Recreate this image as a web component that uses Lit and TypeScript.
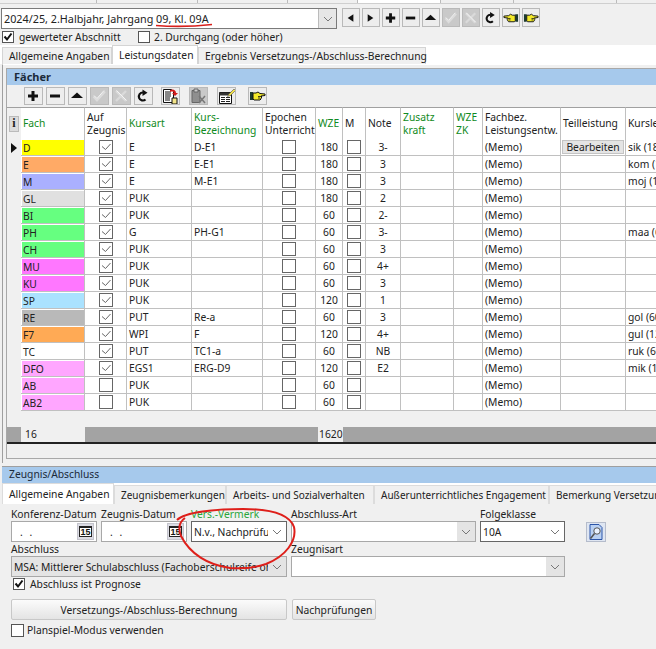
import { LitElement, html, css, svg } from "lit";
import { customElement } from "lit/decorators.js";

const ROWS: [string, string, boolean, string, string, string, string, string][] = [
  ["D", "#ffff00", true, "E", "D-E1", "180", "3-", "sik (180)"],
  ["E", "#ffaa66", true, "E", "E-E1", "180", "3", "kom (180)"],
  ["M", "#aab0ff", true, "E", "M-E1", "180", "3", "moj (180)"],
  ["GL", "#e0e0e0", true, "PUK", "", "180", "2", ""],
  ["BI", "#66ff80", true, "PUK", "", "60", "2-", ""],
  ["PH", "#66ff80", true, "G", "PH-G1", "60", "3-", "maa (60)"],
  ["CH", "#66ff80", true, "PUK", "", "60", "3", ""],
  ["MU", "#ff77ff", true, "PUK", "", "60", "4+", ""],
  ["KU", "#ff77ff", true, "PUK", "", "60", "3", ""],
  ["SP", "#aae2ff", true, "PUK", "", "120", "1", ""],
  ["RE", "#b9b9b9", true, "PUT", "Re-a", "60", "3", "gol (60)"],
  ["F7", "#ffaa55", true, "WPI", "F", "120", "4+", "gul (120)"],
  ["TC", "#ffffff", true, "PUT", "TC1-a", "60", "NB", "ruk (60)"],
  ["DFO", "#ffa6ff", true, "EGS1", "ERG-D9", "120", "E2", "mik (120)"],
  ["AB", "#ffa6ff", false, "PUK", "", "60", "", ""],
  ["AB2", "#ffa6ff", false, "PUK", "", "60", "", ""],
];

const chevron = html`<svg class="chev" viewBox="0 0 10 6" width="10" height="6"><path d="M1 1l4 4 4-4" fill="none" stroke="#777" stroke-width="1"/></svg>`;

const hand = (flip: boolean) => svg`<g transform="${flip ? "translate(17 0) scale(-1 1)" : ""}">
  <path d="M1 4h3v8H1z" fill="#1d3b30"/>
  <path d="M4 5h3l2-1 2 1.5 5 .5v1.500l-4 .5 1 1-1 1 0 1-1 1H5l-1-1z" fill="#f4ea2a" stroke="#111" stroke-width="1"/>
  <path d="M9 8.500h3M9 10h2" stroke="#111" stroke-width=".8"/>
</g>`;

const ICONS: Record<string, unknown> = {
  prev: svg`<path d="M11 4v8L5 8z" fill="#111"/>`,
  next: svg`<path d="M5 4v8l6-4z" fill="#111"/>`,
  plus: svg`<path d="M6.500 3h3v3.500H13v3H9.500V13h-3V9.500H3v-3h3.500z" fill="#111"/>`,
  minus: svg`<path d="M3 6.500h10v3H3z" fill="#111"/>`,
  up: svg`<path d="M8 4.500l6 5.500H2z" fill="#111"/>`,
  check: svg`<path d="M2.500 8.500l3.500 4L14 3.500" fill="none" stroke="#dcdcdc" stroke-width="2"/><path d="M3 7.500l3 3 7-8" fill="none" stroke="#f4f4f4" stroke-width="1"/>`,
  cross: svg`<path d="M3 3l10 10M13 3L3 13" stroke="#dadada" stroke-width="2.400" fill="none"/><path d="M3.500 2.500l10 10" stroke="#f4f4f4" stroke-width="1" fill="none"/>`,
  redo: svg`<path d="M10.500 11.500A4 4 0 1 1 8 4.500" fill="none" stroke="#111" stroke-width="2.200"/><path d="M7.500 1.500l5 3.200-5 3.300z" fill="#111"/>`,
  handL: hand(true),
  handR: hand(false),
  doc: svg`<path d="M1.500 1.500h8l2 2v11h-10z" fill="#fff" stroke="#111"/><path d="M3 4h6M3 6h6M3 8h6M3 10h5M3 12h5" stroke="#111"/><path d="M8 2c3-1.500 6 0 6 3l2 0-3 3-3-3h2c0-1-2-2-4-1z" fill="#d21b1b"/><path d="M10 10h5v6h-5z" fill="#f3e58a" stroke="#111"/>`,
  doc2: svg`<path d="M2 2.500h8v12H2z" fill="#8f8f8f" stroke="#666"/><path d="M4 1h4v3H4z" fill="#ccc" stroke="#666"/><path d="M9 8l6 7M15 8l-6 7" stroke="#777" stroke-width="1.500"/>`,
  table: svg`<path d="M1.500 4.500h12v11h-12z" fill="#fff" stroke="#111"/><path d="M1.500 4.500h12v3h-12z" fill="#333"/><path d="M3 9h4v1H3zM3 11h4v1H3zM3 13h4v1H3zM8 9h4v1H8zM8 11h4v1H8zM8 13h4v1H8z" fill="#222"/><path d="M11 6l5-5 1.500 1.500-5 5-3 1z" fill="#f2e24a" stroke="#555" stroke-width=".6"/>`,
};

@customElement("app-root")
export class AppRoot extends LitElement {
  static styles = css`
    :host { display: block; position: relative; width: 656px; height: 649px; overflow: hidden; background: #f0f0f0;
      font-family: "Noto Sans", "DejaVu Sans", sans-serif; font-size: 10.3px; color: #222; }
    * { box-sizing: border-box; }
    .strip { display: flex; height: 4px; border-bottom: 1px solid #cfcfcf; background: #f0f0f0; }
    .strip span { border-right: 1px solid #bbb; }
    .strip .on { background: #fff; }
    .head { display: flex; height: 21px; margin: 4px 0 0 1px; }
    .combo { display: flex; align-items: center; justify-content: space-between; background: #fff; border: 1px solid #7a7a7a; }
    .main-combo { width: 336px; padding-left: 2px; font-size: 10.8px; }
    .main-combo .btn { width: 18px; height: 100%; background: #e6e6e6; border-left: 1px solid #bbb; display: flex; align-items: center; justify-content: center; }
    .nav { display: flex; margin-left: 5px; gap: 2px; }
    .tb { width: 18px; height: 19px; background: #ededed; border: 1px solid #b9b9b9; display: flex; align-items: center; justify-content: center; flex: none; }
    .tb.off { background: #c9c9c9; }
    .checks { display: flex; align-items: center; height: 13px; margin-top: 1px; }
    .cb { width: 12px; height: 12px; border: 1px solid #555; background: #fff; display: inline-flex; flex: none; }
    .cb svg { display: block; }
    .c1 { margin-left: 2px; }
    .checks .t { margin-left: 5px; width: 119px; }
    .checks .t2 { margin-left: 4px; }
    .tabs { display: flex; align-items: flex-end; background: #fff; height: 19px; margin-top: 2px; padding-left: 2px; }
    .tab { height: 17px; padding: 0 6px; display: flex; align-items: center; background: #f0f0f0; border: 1px solid #d4d4d4; border-bottom: 0; white-space: nowrap; }
    .tab.on { height: 19px; background: #fff; border-color: #d4d4d4; }
    .w1 { width: 110px; } .w2 { width: 86px; } .w3 { width: 228px; }
    .page { height: 399px; border-left: 1px solid #9f9f9f; margin-left: 2px; padding: 3px 0 0 3px; background: #f0f0f0; border-top: 1px solid #fff; }
    .panel { height: 391px; border: 1px solid #a8a8a8; border-right: 0; }
    .bluebar { height: 16px; background: #a6c9ec; font-weight: 700; font-size: 11px; padding-left: 7px; line-height: 15px; color: #1b2a3a; }
    .toolbar { display: flex; height: 22px; align-items: center; padding-left: 17px; gap: 3px; }
    .toolbar .tb { height: 18px; width: 19px; }
    .grid { display: grid; grid-template-columns: 14px 64px 42px 65px 71px 53px 27px 23px 35px 53px 29px 78px 65px 100px; }
    .gh { height: 32px; background: #fff; border-top: 1px solid #a0a0a0; border-right: 1px solid #c0c0c0; display: flex; align-items: center; padding-left: 2px; line-height: 13px; white-space: nowrap; overflow: hidden; }
    .gh.g, .g { color: #108a22; }
    .gutter { background: #f0f0f0; display: flex; align-items: center; justify-content: center; padding: 0; }
    .gh.gutter { border-right: 0; justify-content: flex-start; padding-left: 2px; }
    .ibox { width: 10px; height: 16px; background: #dcdcdc; border: 1px solid #bbb; font-family: "Liberation Serif", serif; font-weight: 700; font-size: 12px; display: flex; align-items: center; justify-content: center; }
    .arrow { width: 0; height: 0; border-left: 6px solid #111; border-top: 5px solid transparent; border-bottom: 5px solid transparent; margin-left: 4px; }
    .gc { height: 17px; background: #fff; border-right: 1px solid #c0c0c0; border-bottom: 1px solid #c0c0c0; padding-left: 2px; line-height: 17px; white-space: nowrap; overflow: hidden; display: flex; align-items: center; }
    .gc.gutter { background: #f0f0f0; border: 0; padding: 0; justify-content: flex-start; }
    .gc.fach { padding: 1px 0 1px 1px; }
    .gc.fach span { display: block; height: 15px; width: 100%; padding-left: 1px; line-height: 16px; }
    .gc.center { justify-content: center; padding-left: 0; }
    .gc .big { width: 14px; height: 14px; border: 1px solid #666; background: #fff; flex: none; }
    .bear { width: 62px; height: 14px; background: #e4e4e4; border: 1px solid #c4c4c4; display: flex; align-items: center; justify-content: center; line-height: 14px; }
    .gap { height: 16px; }
    .foot { display: grid; grid-template-columns: 14px 64px 233px 25px; height: 15px; background: #a3a3a3; }
    .foot div { background: #f0f0f0; padding-left: 4px; line-height: 14px; }
    .foot div.none { background: transparent; }
    .foot .n { padding-left: 1px; overflow: hidden; }
    .bar { height: 1.5px; background: #222; }
    .lower { margin-top: 3px; border-top: 1px solid #9f9f9f; margin-left: 2px; }
    .lowerbar { height: 16px; background: #a6c9ec; padding-left: 7px; line-height: 15px; color: #1b2a3a; }
    .tabs2 { display: flex; align-items: flex-end; height: 21px; background: #fff; font-size: 10px; }
    .tab2 { height: 19px; display: flex; align-items: center; padding-left: 6px; background: #f0f0f0; border: 1px solid #dcdcdc; border-bottom: 0; white-space: nowrap; overflow: hidden; flex: none; }
    .tab2.on { height: 21px; background: #fff; font-size: 10.3px; }
    .form { padding: 3px 0 0 9px; display: grid; grid-template-columns: 86px 86px 96px 185px 85px; column-gap: 4px; grid-template-rows: 14px 21px 14px 21px; width: 560px; }
    .lab { line-height: 15px; white-space: nowrap; }
    .lab.vg { color: #2aa53a; }
    .inp { height: 21px; background: #fff; border: 1px solid #a8a8a8; display: flex; align-items: center; justify-content: space-between; white-space: nowrap; overflow: hidden; }
    .date { padding: 0 2px 0 8px; letter-spacing: 2px; }
    .cal { width: 17px; height: 17px; padding: 2px 1px; background: #dcdce4; border: 1px solid #c4c4cc; flex: none; display: flex; }
    .cal b { display: block; width: 100%; height: 100%; background: #fff; border: 1px solid #222; border-top-width: 2px; font: 700 9px/9px "Liberation Sans", sans-serif; letter-spacing: 0; text-align: center; color: #111; }
    .sel { padding-left: 2px; }
    .sel .txt { overflow: hidden; flex: 1; white-space: nowrap; }
    .chev { flex: none; margin: 0 4px; }
    .sel.vers, .sel.folge { border-color: #666; }
    .sel.gray { background: #e4e4e4; }
    .dd { width: 18px; height: 100%; background: #e4e4e4; display: flex; align-items: center; justify-content: center; flex: none; }
    .span3 { grid-column: span 3; }
    .span2 { grid-column: span 2; }
    .abs { display: flex; align-items: center; margin: 0 0 0 11px; height: 13px; }
    .abs span:last-child { margin-left: 5px; }
    .buttons { display: flex; margin: 9px 0 0 9px; gap: 5px; }
    .pb { height: 21px; background: linear-gradient(#fbfbfb, #e4e4e4); border: 1px solid #c8c8c8; border-radius: 2px; display: flex; align-items: center; justify-content: center; }
    .plan { display: flex; align-items: center; margin: 3px 0 0 9px; height: 14px; }
    .plan .cb { width: 13px; height: 13px; }
    .plan span:last-child { margin-left: 3px; }
    .formrow { position: relative; }
    .mag { position: absolute; left: 584px; top: 18px; width: 20px; height: 20px; }
    .ink { position: absolute; left: 0; top: 0; pointer-events: none; }
  `;

  private tb(name: string, cls = "") {
    return html`<div class="tb ${cls}"><svg width="17" height="16" viewBox="0 0 17 16">${ICONS[name]}</svg></div>`;
  }

  private box(on: boolean, cls = "") {
    return html`<span class="cb ${cls}">${on ? html`<svg width="10" height="10" viewBox="0 0 10 10"><path d="M1.500 4.500l2.500 3 4.500-6" fill="none" stroke="#111" stroke-width="2"/></svg>` : ""}</span>`;
  }

  private gridCheck(on: boolean) {
    return html`<span class="big">${on ? html`<svg width="12" height="12" viewBox="0 0 12 12" style="display:block"><path d="M2 5.500l3.500 3L10.500 3" fill="none" stroke="#666" stroke-width="1"/></svg>` : ""}</span>`;
  }

  render() {
    return html`
      <div class="strip">
        <span style="width:97px"></span><span style="width:101px"></span><span style="width:90px"></span><span style="width:70px"></span>
        <span class="on" style="width:83px"></span><span style="width:73px"></span><span style="width:103px"></span>
      </div>
      <div class="head">
        <div class="combo main-combo"><span>2024/25, 2.Halbjahr, Jahrgang 09, Kl. 09A</span><span class="btn">${chevron}</span></div>
        <div class="nav">
          ${this.tb("prev")}${this.tb("next")}${this.tb("plus")}${this.tb("minus")}${this.tb("up")}
          ${this.tb("check", "off")}${this.tb("cross", "off")}${this.tb("redo")}${this.tb("handL")}${this.tb("handR")}
        </div>
      </div>
      <div class="checks">
        ${this.box(true, "c1")}<span class="t">gewerteter Abschnitt</span>
        ${this.box(false)}<span class="t2">2. Durchgang (oder höher)</span>
      </div>
      <div class="tabs">
        <div class="tab w1">Allgemeine Angaben</div>
        <div class="tab on w2">Leistungsdaten</div>
        <div class="tab w3">Ergebnis Versetzungs-/Abschluss-Berechnung</div>
      </div>
      <div class="page">
        <div class="panel">
          <div class="bluebar">Fächer</div>
          <div class="toolbar">
            ${this.tb("plus")}${this.tb("minus")}${this.tb("up")}${this.tb("check", "off")}${this.tb("cross", "off")}${this.tb("redo")}
            <span style="width:2px"></span>${this.tb("doc")}
            <span style="width:3px"></span>${this.tb("doc2", "off")}
            <span style="width:3px"></span>${this.tb("table")}
            <span style="width:6px"></span>${this.tb("handR")}
          </div>
          <div class="grid">
            <div class="gh gutter"><span class="ibox">i</span></div>
            <div class="gh g">Fach</div>
            <div class="gh">Auf<br />Zeugnis</div>
            <div class="gh g">Kursart</div>
            <div class="gh g">Kurs-<br />Bezeichnung</div>
            <div class="gh">Epochen<br />Unterricht</div>
            <div class="gh g">WZE</div>
            <div class="gh">M</div>
            <div class="gh">Note</div>
            <div class="gh g">Zusatz<br />kraft</div>
            <div class="gh g">WZE<br />ZK</div>
            <div class="gh">Fachbez.<br />Leistungsentw.</div>
            <div class="gh">Teilleistung</div>
            <div class="gh">Kursleiter</div>
            ${ROWS.map(
              (r, i) => html`
                <div class="gc gutter">${i === 0 ? html`<span class="arrow"></span>` : ""}</div>
                <div class="gc fach"><span style="background:${r[1]}">${r[0]}</span></div>
                <div class="gc center">${this.gridCheck(r[2])}</div>
                <div class="gc">${r[3]}</div>
                <div class="gc">${r[4]}</div>
                <div class="gc center">${this.gridCheck(false)}</div>
                <div class="gc center">${r[5]}</div>
                <div class="gc center">${this.gridCheck(false)}</div>
                <div class="gc center">${r[6]}</div>
                <div class="gc"></div>
                <div class="gc"></div>
                <div class="gc">(Memo)</div>
                <div class="gc center">${i === 0 ? html`<span class="bear">Bearbeiten</span>` : ""}</div>
                <div class="gc">${r[7]}</div>
              `,
            )}
          </div>
          <div class="gap"></div>
          <div class="foot"><div class="none"></div><div>16</div><div class="none"></div><div class="n">1620</div></div>
          <div class="bar"></div>
        </div>
      </div>
      <div class="lower">
        <div class="lowerbar">Zeugnis/Abschluss</div>
        <div class="tabs2">
          <div class="tab2 on" style="width:112px">Allgemeine Angaben</div>
          <div class="tab2" style="width:112px">Zeugnisbemerkungen</div>
          <div class="tab2" style="width:148px">Arbeits- und Sozialverhalten</div>
          <div class="tab2" style="width:175px">Außerunterrichtliches Engagement</div>
          <div class="tab2" style="width:110px">Bemerkung Versetzung</div>
        </div>
        <div class="formrow">
          <div class="form">
            <div class="lab">Konferenz-Datum</div>
            <div class="lab">Zeugnis-Datum</div>
            <div class="lab vg">Vers.-Vermerk</div>
            <div class="lab">Abschluss-Art</div>
            <div class="lab">Folgeklasse</div>
            <div class="inp date">. .<span class="cal"><b>15</b></span></div>
            <div class="inp date">. .<span class="cal"><b>15</b></span></div>
            <div class="inp sel vers"><span class="txt">N.v., Nachprüfung</span>${chevron}</div>
            <div class="inp"><span></span><span class="dd">${chevron}</span></div>
            <div class="inp sel folge"><span class="txt">10A</span>${chevron}</div>
            <div class="lab span3">Abschluss</div>
            <div class="lab span2">Zeugnisart</div>
            <div class="inp sel gray span3"><span class="txt">MSA: Mittlerer Schulabschluss (Fachoberschulreife ohne Qualifikation)</span>${chevron}</div>
            <div class="inp span2"><span></span><span class="dd">${chevron}</span></div>
          </div>
          <svg class="mag" viewBox="0 0 20 20">
            <rect x="0.5" y="0.5" width="19" height="19" fill="#dfe6f2" stroke="#b5bccb"/>
            <path d="M4 2.500h9l3 3v12H4z" fill="#b9d0f2" stroke="#2b55a8"/>
            <circle cx="11" cy="9" r="3.200" fill="#eaf2ff" stroke="#555"/>
            <path d="M8.500 11.500l-4 5" stroke="#555" stroke-width="1.600"/>
          </svg>
        </div>
        <div class="abs">${this.box(true)}<span>Abschluss ist Prognose</span></div>
        <div class="buttons">
          <div class="pb" style="width:276px">Versetzungs-/Abschluss-Berechnung</div>
          <div class="pb" style="width:84px">Nachprüfungen</div>
        </div>
        <div class="plan">${this.box(false)}<span>Planspiel-Modus verwenden</span></div>
      </div>
      <svg class="ink" width="656" height="649" viewBox="0 0 656 649">
        <path d="M156 25.500c18 1.500 38 1 56-1" fill="none" stroke="#d8201c" stroke-width="1.600"/>
        <path d="M177 520c8-8 38-11 66-11 24 0 46 4 51 18 3 14-8 29-28 37-12 4-24 5-36 4-22-3-40-14-49-32-3-8-2-14 4-18" fill="none" stroke="#de1f1a" stroke-width="2"/>
      </svg>
    `;
  }
}
